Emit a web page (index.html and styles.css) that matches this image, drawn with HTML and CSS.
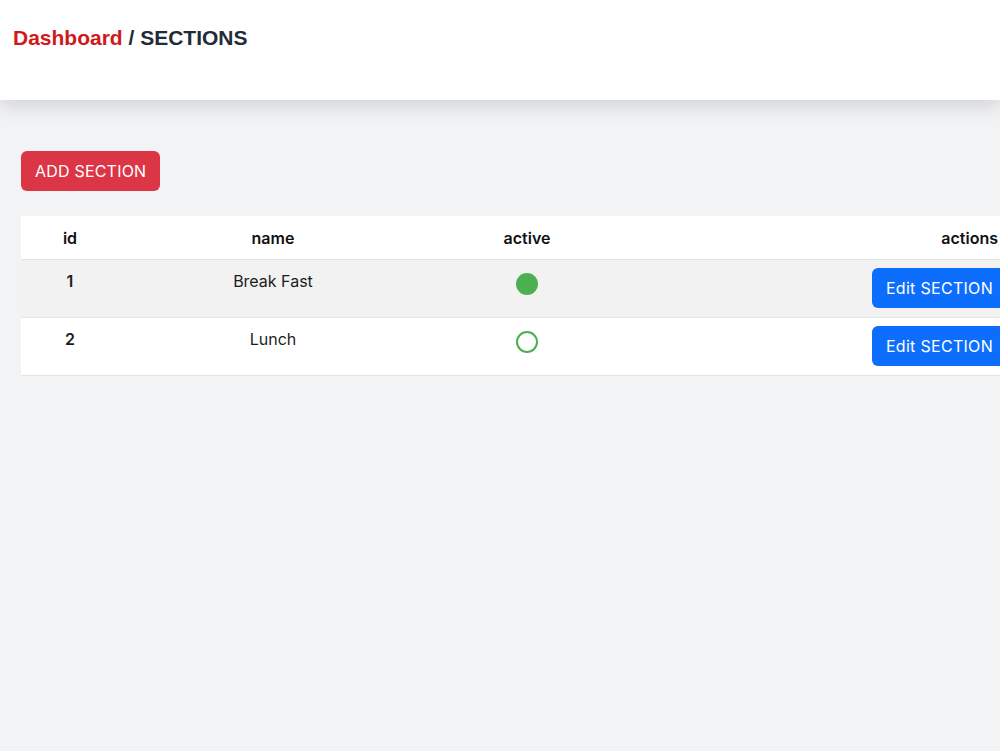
FILE: index.html
```html
<!DOCTYPE html>
<html lang="en">
<head>
<meta charset="utf-8">
<title>Sections</title>
<link rel="stylesheet" href="styles.css">
</head>
<body>
<header class="topbar">
  <h1 class="crumbs"><span class="crumb-link">Dashboard</span> / SECTIONS</h1>
</header>
<main class="content">
  <button class="btn btn-add">ADD SECTION</button>
  <table class="grid">
    <colgroup>
      <col class="c-id"><col class="c-name"><col class="c-active"><col class="c-actions">
    </colgroup>
    <thead>
      <tr><th>id</th><th>name</th><th>active</th><th class="right">actions</th></tr>
    </thead>
    <tbody>
      <tr class="stripe">
        <td class="num">1</td>
        <td>Break Fast</td>
        <td><span class="dot on"></span></td>
        <td class="right act"><button class="btn btn-edit">Edit SECTION</button></td>
      </tr>
      <tr>
        <td class="num">2</td>
        <td>Lunch</td>
        <td><span class="dot off"></span></td>
        <td class="right act"><button class="btn btn-edit">Edit SECTION</button></td>
      </tr>
    </tbody>
  </table>
</main>
</body>
</html>
```
FILE: styles.css
```css
html, body {
  margin: 0;
  padding: 0;
  overflow-x: hidden;
}
body {
  background: #f2f3f5;
  font-family: Inter, "Noto Sans", sans-serif;
  color: #1a1a1a;
  min-height: 751px;
}
.topbar {
  height: 100px;
  box-sizing: border-box;
  background: #ffffff;
  padding: 26px 13px 0;
  box-shadow: 0 6px 18px rgba(0, 0, 0, 0.14);
  position: relative;
}
.crumbs {
  margin: 0;
  font-family: "Liberation Sans", Arial, sans-serif;
  font-size: 21px;
  font-weight: 700;
  line-height: 24px;
  color: #222b38;
}
.crumb-link {
  color: #d0191a;
}
.content {
  padding: 51px 0 0 21px;
}
.btn {
  font-family: Inter, "Noto Sans", sans-serif;
  font-size: 16px;
  line-height: 24px;
  letter-spacing: 0.3px;
  color: #ffffff;
  border: none;
  border-radius: 6px;
  padding: 8px 14px;
  cursor: pointer;
  white-space: nowrap;
}
.btn-add {
  background: #dc3545;
  display: block;
  margin-bottom: 25px;
  letter-spacing: 0.2px;
}
.btn-edit {
  background: #0d6efd;
}
.grid {
  width: 1000px;
  border-collapse: collapse;
  table-layout: fixed;
  background: #ffffff;
}
.c-id { width: 98px; }
.c-name { width: 308px; }
.c-active { width: 200px; }
.grid th {
  font-weight: 600;
  font-size: 16px;
  line-height: 24px;
  padding: 10px 8px 9px;
  text-align: center;
  border-bottom: 1px solid #e2e3e5;
  color: #111111;
}
.grid td {
  font-size: 16px;
  line-height: 24px;
  padding: 9px 8px 8px;
  text-align: center;
  vertical-align: top;
  border-bottom: 1px solid #e2e3e5;
  color: #1c1c1c;
}
.grid th.right { text-align: right; padding-right: 23px; }
.grid td.act { padding: 8px 14px 9px 8px; text-align: right; }
.grid td.num { font-weight: 600; }
.stripe td { background: #f2f2f2; }
.dot {
  display: inline-block;
  width: 22px;
  height: 22px;
  box-sizing: border-box;
  border-radius: 50%;
  margin-top: 4px;
  vertical-align: top;
}
.dot.on { background: #4caf50; }
.dot.off { border: 2px solid #4caf50; background: transparent; }
```
